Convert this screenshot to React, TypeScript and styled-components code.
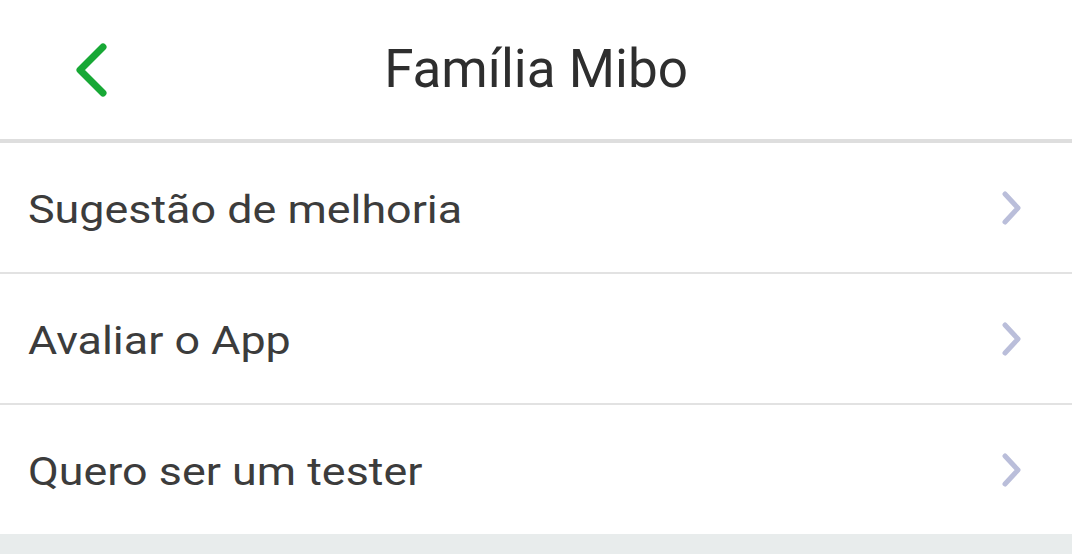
import React from "react";
import styled, { createGlobalStyle } from "styled-components";

const Global = createGlobalStyle`
  html, body { margin: 0; padding: 0; background: #e8ecec; }
  body { font-family: Roboto, "Noto Sans", sans-serif; }
`;

const Page = styled.div`
  width: 1072px;
  height: 554px;
  display: flex;
  flex-direction: column;
  background: #e8ecec;
  overflow: hidden;
`;

const Header = styled.header`
  height: 139px;
  background: #fff;
  border-bottom: 4px solid #dedede;
  display: grid;
  grid-template-columns: 160px 1fr 160px;
  align-items: center;
`;

const BackButton = styled.button`
  border: 0;
  background: none;
  padding: 0 0 0 70px;
  display: flex;
  align-items: center;
  height: 100%;
  cursor: pointer;
`;

const Title = styled.h1`
  margin: 0;
  text-align: center;
  font-family: Roboto, sans-serif;
  font-weight: 400;
  font-size: 53px;
  color: #2e2e2e;
  padding-bottom: 2px;
`;

const List = styled.ul`
  list-style: none;
  margin: 0;
  padding: 0;
  background: #fff;
`;

const Row = styled.li<{ $last?: boolean }>`
  height: 129px;
  display: flex;
  align-items: center;
  justify-content: space-between;
  padding: 0 47px 0 28px;
  border-bottom: ${(p) => (p.$last ? "none" : "2px solid #e2e2e2")};
`;

const Label = styled.span`
  font-family: Roboto, sans-serif;
  font-size: 38px;
  color: #3c3c3c;
  padding-top: 4px;
  transform: scaleX(1.18);
  transform-origin: left center;
`;

const Chevron = () => (
  <svg width="26" height="36" viewBox="0 0 26 36">
    <path d="M6 4 L19 18 L6 32" fill="none" stroke="#babeda" strokeWidth="5" strokeLinecap="round" strokeLinejoin="round" />
  </svg>
);

const BackIcon = () => (
  <svg width="42" height="58" viewBox="0 0 42 58">
    <path d="M33 6 L10 29 L33 52" fill="none" stroke="#17a835" strokeWidth="7" strokeLinecap="round" strokeLinejoin="round" />
  </svg>
);

const items = ["Sugestão de melhoria", "Avaliar o App", "Quero ser um tester"];

export default function App() {
  return (
    <Page>
      <Global />
      <Header>
        <BackButton aria-label="Voltar">
          <BackIcon />
        </BackButton>
        <Title>Família Mibo</Title>
        <div />
      </Header>
      <List>
        {items.map((t, i) => (
          <Row key={t} $last={i === items.length - 1}>
            <Label>{t}</Label>
            <Chevron />
          </Row>
        ))}
      </List>
    </Page>
  );
}
